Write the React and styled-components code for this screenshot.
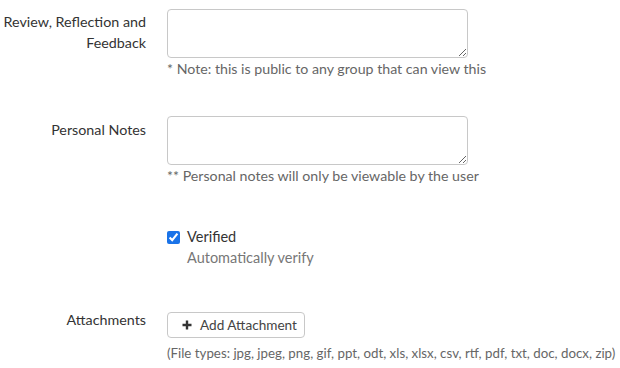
import styled, { createGlobalStyle } from "styled-components";

const GlobalStyle = createGlobalStyle`
    body {
        margin: 0;
        background: #fff;
        font-family: "Lato", "Noto Sans", sans-serif;
        color: #333;
    }
`;

const Form = styled.div`
    padding-top: 9px;
    display: flex;
    flex-direction: column;
`;

const Row = styled.div`
    display: grid;
    grid-template-columns: 146px 1fr;
    column-gap: 21px;
    margin-bottom: ${(p) => p.gap || 0}px;
`;

const Label = styled.div`
    text-align: right;
    font-size: 14.3px;
    line-height: 21px;
    margin-top: ${(p) => p.top || 0}px;
    color: #333;
`;

const Field = styled.div`
    display: flex;
    flex-direction: column;
    align-items: flex-start;
`;

const TextArea = styled.textarea`
    width: 301px;
    height: 49px;
    box-sizing: border-box;
    border: 1px solid #c8c8c8;
    border-radius: 4px;
    margin: 0;
    padding: 6px 8px;
    font-family: inherit;
    display: block;
`;

const Hint = styled.div`
    font-size: ${(p) => p.size || 14.2}px;
    line-height: 18px;
    color: #666;
    margin-top: ${(p) => p.top || 2}px;
    white-space: nowrap;
`;

const CheckLine = styled.label`
    display: flex;
    align-items: center;
    gap: 7px;
    font-size: 14.5px;
    line-height: 20px;
    color: #333;

    input {
        margin: 0;
        width: 13px;
        height: 13px;
        accent-color: #1a73e8;
    }
`;

const SubText = styled.div`
    font-size: 14.5px;
    line-height: 20px;
    color: #777;
    margin-left: 20px;
    margin-top: 1px;
`;

const Button = styled.button`
    display: flex;
    align-items: center;
    gap: 8px;
    height: 26px;
    width: 138px;
    box-sizing: border-box;
    padding: 0 0 0 14px;
    background: #fff;
    border: 1px solid #c8c8c8;
    border-radius: 4px;
    font-family: inherit;
    font-size: 13.6px;
    color: #444;
    white-space: nowrap;

    svg {
        width: 10px;
        height: 10px;
        flex: none;
    }
`;

const PlusIcon = () => (
    <svg viewBox="0 0 10 10">
        <path d="M5 0.5v9M0.5 5h9" stroke="#333" strokeWidth="2.4" />
    </svg>
);

const App = () => {
    return (
        <>
            <GlobalStyle />
            <Form>
                <Row gap={38}>
                    <Label top={2}>
                        Review, Reflection and
                        <br />
                        Feedback
                    </Label>
                    <Field>
                        <TextArea />
                        <Hint>* Note: this is public to any group that can view this</Hint>
                    </Field>
                </Row>
                <Row gap={42}>
                    <Label top={3}>Personal Notes</Label>
                    <Field>
                        <TextArea />
                        <Hint>** Personal notes will only be viewable by the user</Hint>
                    </Field>
                </Row>
                <Row gap={44}>
                    <div />
                    <Field>
                        <CheckLine>
                            <input type="checkbox" defaultChecked />
                            Verified
                        </CheckLine>
                        <SubText>Automatically verify</SubText>
                    </Field>
                </Row>
                <Row>
                    <Label top={-3}>Attachments</Label>
                    <Field>
                        <Button>
                            <PlusIcon />
                            Add Attachment
                        </Button>
                        <Hint size={13.3} top={6}>
                            (File types: jpg, jpeg, png, gif, ppt, odt, xls, xlsx, csv, rtf, pdf, txt, doc, docx, zip)
                        </Hint>
                    </Field>
                </Row>
            </Form>
        </>
    );
};

export default App;
